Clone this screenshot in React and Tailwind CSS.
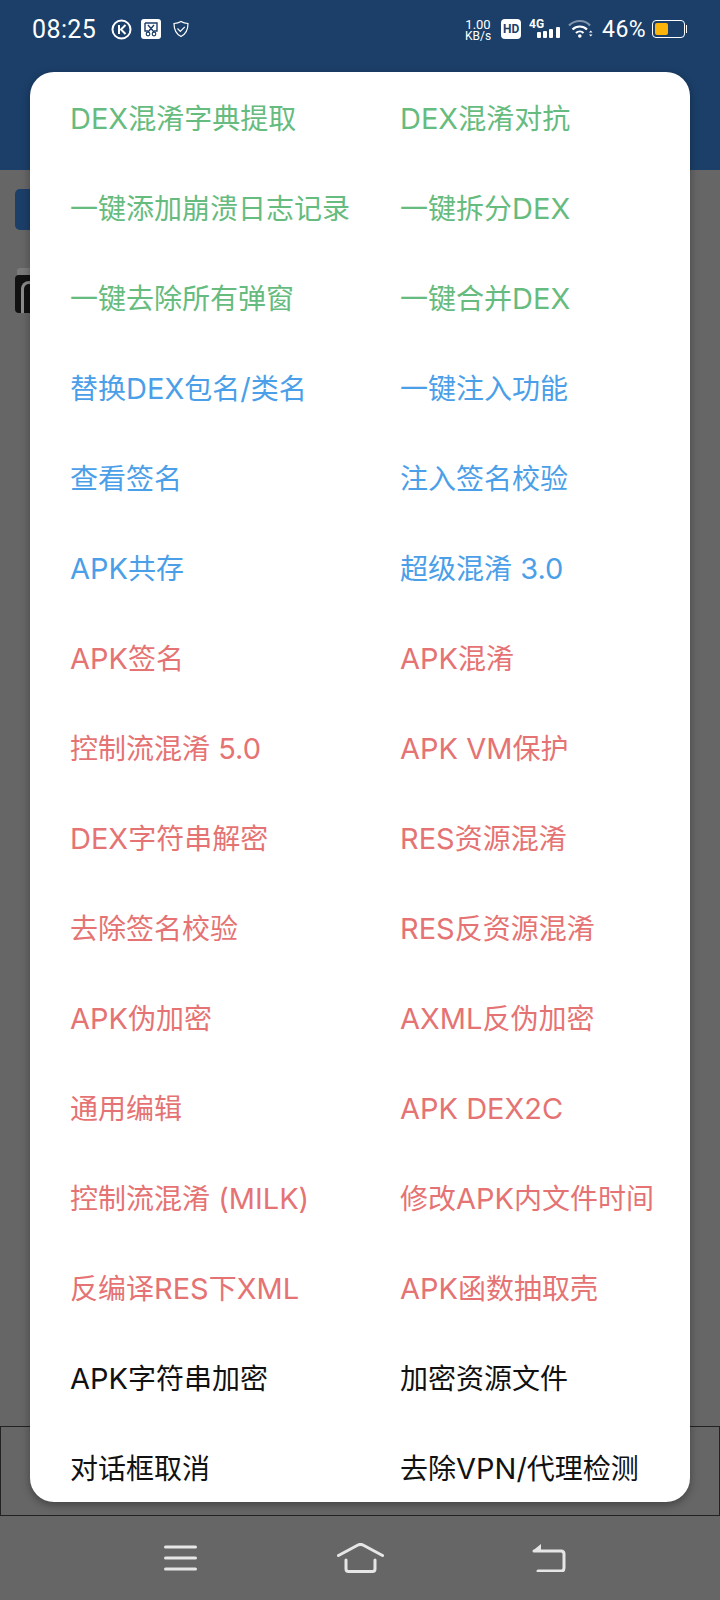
const FONT = { fontFamily: 'Inter, "Noto Sans CJK SC", sans-serif' };

const ROWS = [
  ["DEX混淆字典提取", "DEX混淆对抗", "green"],
  ["一键添加崩溃日志记录", "一键拆分DEX", "green"],
  ["一键去除所有弹窗", "一键合并DEX", "green"],
  ["替换DEX包名/类名", "一键注入功能", "blue"],
  ["查看签名", "注入签名校验", "blue"],
  ["APK共存", "超级混淆 3.0", "blue"],
  ["APK签名", "APK混淆", "red"],
  ["控制流混淆 5.0", "APK VM保护", "red"],
  ["DEX字符串解密", "RES资源混淆", "red"],
  ["去除签名校验", "RES反资源混淆", "red"],
  ["APK伪加密", "AXML反伪加密", "red"],
  ["通用编辑", "APK DEX2C", "red"],
  ["控制流混淆 (MILK)", "修改APK内文件时间", "red"],
  ["反编译RES下XML", "APK函数抽取壳", "red"],
  ["APK字符串加密", "加密资源文件", "black"],
  ["对话框取消", "去除VPN/代理检测", "black"],
];

const COLORS = {
  green: "text-[#66bb7e]",
  blue: "text-[#4b9fe8]",
  red: "text-[#e57373]",
  black: "text-[#111111]",
};

// latin runs are a touch larger than the CJK ones in this font
function Label({ text }) {
  const parts = text.split(/([A-Za-z0-9 .()/]+)/).filter(Boolean);
  return (
    <span className="whitespace-nowrap">
      {parts.map((p, i) =>
        /^[A-Za-z0-9 .()/]+$/.test(p) ? <span key={i} className="text-[29px] leading-[0]">{p}</span> : <span key={i}>{p}</span>
      )}
    </span>
  );
}

function StatusBar() {
  return (
    <div className="flex h-[58px] items-center pl-[32px] pr-[33px] text-white">
      <span className="w-[79px] text-[25px] leading-none tracking-[0.4px]" style={{ fontFamily: "Roboto, sans-serif" }}>08:25</span>
      <svg viewBox="0 0 21 21" className="h-[21px] w-[21px]" fill="none" stroke="#fff">
        <circle cx="10.500" cy="10.500" r="9" strokeWidth="2" />
        <path d="M8 6v9M14.500 6l-4.500 4.500 4.500 4.500" strokeWidth="2" />
      </svg>
      <svg viewBox="0 0 20 20" className="ml-[9px] h-5 w-5">
        <rect width="20" height="20" rx="3" fill="#fff" />
        <path d="M4 4h12v8h-3M4 4v8h3M7 6l6 7M13 6l-6 7" fill="none" stroke="#1b3f69" strokeWidth="1.400" />
        <circle cx="7" cy="15" r="1.800" fill="none" stroke="#1b3f69" strokeWidth="1.200" />
        <circle cx="13" cy="15" r="1.800" fill="none" stroke="#1b3f69" strokeWidth="1.200" />
      </svg>
      <svg viewBox="0 0 18 18" className="ml-[11px] h-[18px] w-[18px]" fill="none" stroke="#fff" strokeWidth="1.200">
        <path d="M9 1.500c2 1.200 4 1.800 7 2 0 6-2 10.500-7 13-5-2.500-7-7-7-13 3-.2 5-.8 7-2z" />
        <path d="M5.500 8.500l2.800 2.800 4.500-4.500" />
      </svg>
      <div className="ml-auto flex items-center">
        <div className="flex flex-col items-center leading-none" style={{ fontFamily: "Roboto, sans-serif" }}>
          <span className="text-[13px] leading-[13px]">1.00</span>
          <span className="text-[12px] leading-[10px]">KB/s</span>
        </div>
        <div className="ml-[10px] flex h-5 w-5 items-center justify-center rounded-[4px] bg-white text-[12px] font-bold leading-none text-[#1b3f69]" style={{ fontFamily: "Roboto, sans-serif" }}>HD</div>
        <svg viewBox="0 0 32 22" className="ml-2 h-[22px] w-8">
          <text x="0" y="10" fontSize="12" fontWeight="700" fill="#fff" fontFamily="Roboto, sans-serif">4G</text>
          <rect x="8" y="14" width="4" height="6" rx="1" fill="#fff" />
          <rect x="14" y="13" width="4" height="7" rx="1" fill="#fff" />
          <rect x="20" y="11" width="4" height="9" rx="1" fill="#fff" />
          <rect x="27" y="9" width="4" height="11" rx="1" fill="#fff" />
        </svg>
        <svg viewBox="0 0 25 20" className="ml-[7px] h-5 w-[25px]" fill="none">
          <path d="M1 6.500c6-6 16-6 21 0" stroke="#fff" strokeOpacity=".45" strokeWidth="2.200" />
          <path d="M4.500 10.500c4-4 10.500-4 14.500 0" stroke="#fff" strokeWidth="2.200" />
          <path d="M8 14c2.200-2 5.500-2 7.500 0" stroke="#fff" strokeWidth="2.200" />
          <circle cx="11.800" cy="17" r="1.800" fill="#fff" />
          <path d="M21 13.500h3.500l-1.750-2zM21 15.500h3.500l-1.750 2z" fill="#fff" />
        </svg>
        <span className="ml-[9px] text-[23px] leading-none tracking-[0.4px]" style={{ fontFamily: "Roboto, sans-serif" }}>46%</span>
        <div className="ml-[6px] flex items-center">
          <div className="h-[18px] w-[33px] rounded-[4px] border border-white p-[2px]">
            <div className="h-full w-[13px] rounded-[2px] bg-[#fbb40a]" />
          </div>
          <div className="ml-[1px] h-2 w-[1px] bg-white" />
        </div>
      </div>
    </div>
  );
}

function NavBar() {
  return (
    <div className="mt-[27px] flex items-center pl-[164px]">
      <svg viewBox="0 0 33 26" className="h-[26px] w-[33px]" stroke="#e6e6e6" strokeWidth="3" strokeLinecap="round">
        <path d="M1.500 2h30M1.500 13h30M1.500 24h30" />
      </svg>
      <svg viewBox="0 0 47 30" className="ml-[140px] h-[30px] w-[47px]" fill="none" stroke="#e6e6e6" strokeWidth="3" strokeLinecap="round" strokeLinejoin="round">
        <path d="M1.500 12.500L21 2q2.500-1.200 5 0l19.500 10.500" />
        <path d="M9 17v9q0 2.500 2.500 2.500h24q2.500 0 2.500-2.500v-9" />
      </svg>
      <svg viewBox="0 0 34 28" className="ml-[148px] h-[28px] w-[34px]" fill="none" stroke="#e6e6e6" strokeWidth="3" strokeLinecap="round" strokeLinejoin="round">
        <path d="M9 0L1 6.500h8z" fill="#e6e6e6" stroke="none" />
        <path d="M2 7h27q3 0 3 3v14q0 3-3 3H6" />
      </svg>
    </div>
  );
}

export default function App() {
  return (
    <div className="relative h-[1600px] w-[720px] overflow-hidden bg-[#666666]" style={FONT}>
      <div className="h-[170px] bg-[#1b3f69]">
        <StatusBar />
      </div>
      {/* page behind the dialog */}
      <div className="ml-[15px] mt-[19px] h-[41px] w-[40px] rounded-[5px] bg-[#1b3f69]" />
      <div className="ml-[17px] mt-[38px] h-[7px] w-[30px] rounded-t-[3px] bg-[#7a7a7a]" />
      <div className="ml-[15px] flex h-[38px] w-[30px] items-end rounded-[4px] bg-[#111111] pl-[6px]">
        <div className="h-[32px] w-[16px] rounded-t-[10px] border-[3px] border-b-0 border-[#8a8a8a]" />
      </div>
      <div className="mt-[1113px] h-[90px] border border-[#222222]" />
      <NavBar />

      {/* dialog */}
      <div className="absolute left-[30px] top-[72px] h-[1430px] w-[660px] overflow-hidden rounded-[24px] bg-white pl-[40px] pt-[2px] shadow-[0_3px_8px_rgba(0,0,0,0.35)]">
        {ROWS.map(([a, b, c]) => (
          <div key={a} className={`grid h-[90px] grid-cols-[330px_1fr] items-center text-[28px] leading-none ${COLORS[c]}`}>
            <Label text={a} />
            <Label text={b} />
          </div>
        ))}
      </div>
    </div>
  );
}
